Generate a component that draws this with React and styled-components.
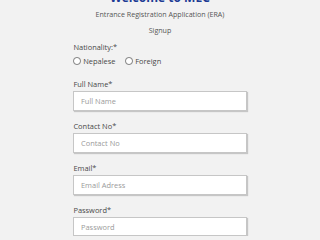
import styled, { createGlobalStyle } from "styled-components";

// the reference is laid out on a 292px wide page; scale every size with the window
const u = (n) => `calc(${n} * 100vw / 292)`;

const GlobalStyle = createGlobalStyle`
  body {
    margin: 0;
    overflow: hidden;
    background: #f2f2f2;
    font-family: "Open Sans", "Liberation Sans", sans-serif;
  }
`;

const fields = [
  { label: "Full Name*", placeholder: "Full Name", type: "text" },
  { label: "Contact No*", placeholder: "Contact No", type: "text" },
  { label: "Email*", placeholder: "Email Adress", type: "email" },
  { label: "Password*", placeholder: "Password", type: "password" },
];

function App() {
  return (
    <>
      <GlobalStyle />
      <Page>
        <Title>Welcome to MEC</Title>
        <SubTitle>Entrance Registration Application (ERA)</SubTitle>
        <SubTitle>Signup</SubTitle>
        <Form>
          <Label>Nationality:*</Label>
          <RadioRow>
            <RadioOption>
              <Radio type="radio" name="nationality" />
              Nepalese
            </RadioOption>
            <RadioOption>
              <Radio type="radio" name="nationality" />
              Foreign
            </RadioOption>
          </RadioRow>
          {fields.map((f) => (
            <Field key={f.label}>
              <Label>{f.label}</Label>
              <Input type={f.type} placeholder={f.placeholder} />
            </Field>
          ))}
        </Form>
      </Page>
    </>
  );
}

export default App;

const Page = styled.div`
  display: flex;
  flex-direction: column;
  align-items: center;
  gap: ${u(5)};
  margin-top: ${u(-9)};
`;

const Title = styled.h1`
  margin: 0 0 ${u(-2)};
  font-size: ${u(11)};
  line-height: ${u(14)};
  font-weight: 700;
  color: #1d3b94;
`;

const SubTitle = styled.p`
  margin: 0;
  font-size: ${u(6.5)};
  line-height: ${u(10)};
  color: #555;
`;

const Form = styled.form`
  width: ${u(158)};
  display: flex;
  flex-direction: column;
`;

const Label = styled.label`
  display: block;
  font-size: ${u(6.8)};
  line-height: ${u(10)};
  color: #484848;
`;

const RadioRow = styled.div`
  display: flex;
  gap: ${u(9)};
  margin-top: ${u(3)};
  margin-bottom: ${u(1.7)};
`;

const RadioOption = styled.label`
  display: flex;
  align-items: center;
  gap: ${u(2)};
  font-size: ${u(6.8)};
  line-height: ${u(10)};
  color: #484848;
`;

const Radio = styled.input`
  appearance: none;
  box-sizing: border-box;
  margin: 0;
  width: ${u(7)};
  height: ${u(7)};
  border: 1px solid #777;
  border-radius: 50%;
  background: #fff;
`;

const Field = styled.div`
  display: flex;
  flex-direction: column;
  gap: ${u(1)};
  margin-top: ${u(9.3)};
`;

const Input = styled.input`
  box-sizing: border-box;
  width: 100%;
  height: ${u(18)};
  padding: 0 ${u(6)};
  border: 1px solid #c6c6c6;
  box-shadow: 1px 1px 1px rgba(0, 0, 0, 0.18);
  background: #fff;
  font-family: inherit;
  font-size: ${u(6.8)};
  color: #444;
  outline: none;

  &::placeholder {
    color: #9a9a9a;
  }
`;
